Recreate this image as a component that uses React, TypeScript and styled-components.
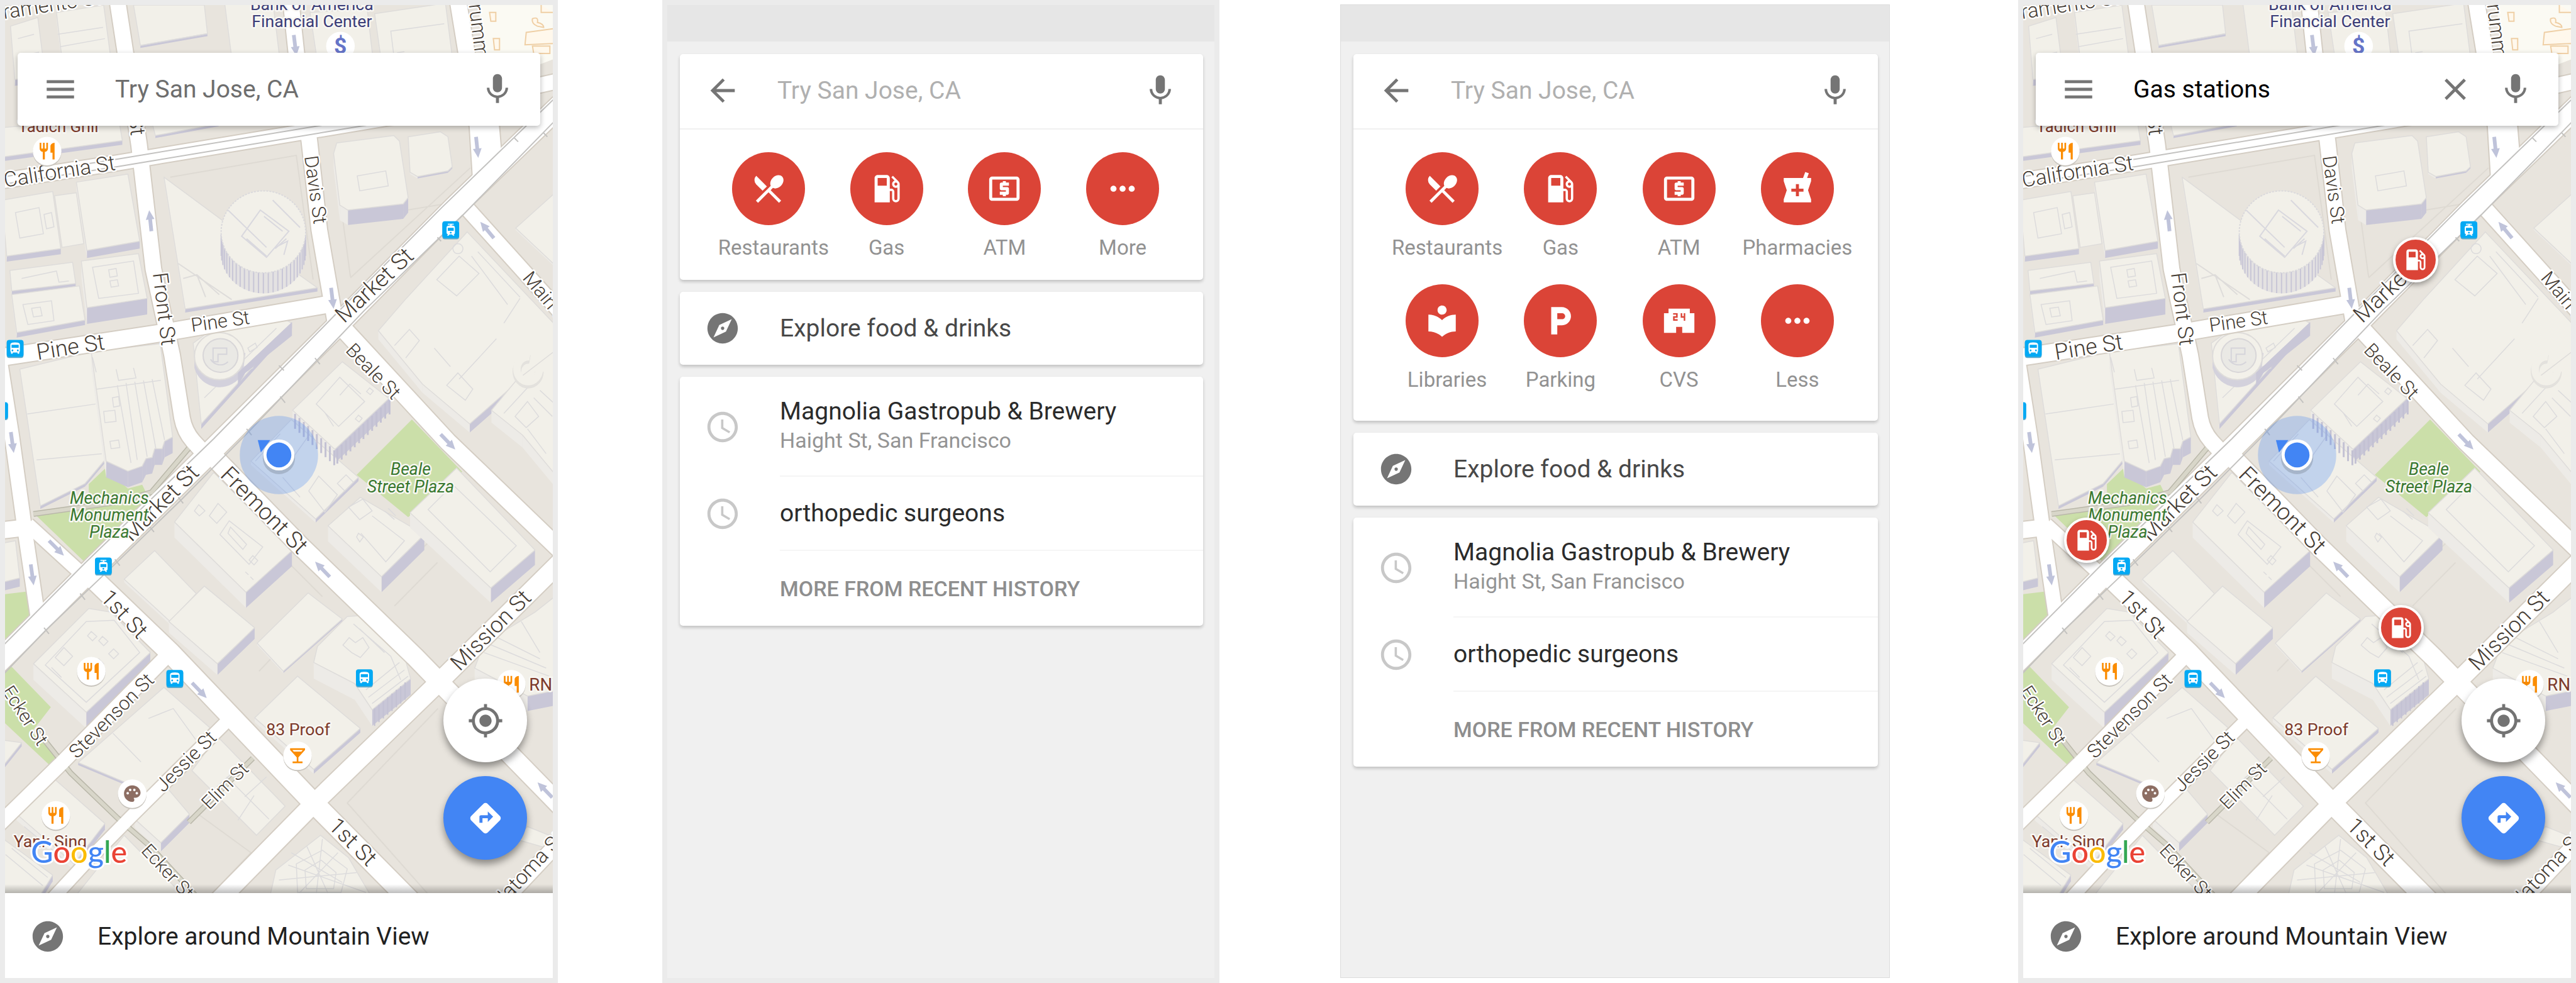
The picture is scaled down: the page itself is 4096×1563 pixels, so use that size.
import React from "react";
import styled, { createGlobalStyle } from "styled-components";
import type { IconType } from "react-icons";
import {
  MdMenu, MdMic, MdArrowBack, MdExplore, MdSchedule, MdMyLocation, MdDirections,
  MdLocalGasStation, MdLocalAtm, MdLocalPharmacy, MdLocalLibrary, MdLocalParking,
  MdLocalConvenienceStore, MdMoreHoriz, MdRestaurantMenu, MdLocalBar, MdPalette,
  MdRestaurant, MdClose, MdDirectionsBus, MdTram,
} from "react-icons/md";

const GlobalStyle = createGlobalStyle`
  * { box-sizing: border-box; }
  body { margin: 0; background: #fff; font-family: Roboto, "Liberation Sans", sans-serif; }
  button, input { font: inherit; color: inherit; border: 0; padding: 0; background: none; }
  svg { display: block; }
`;

const Board = styled.main`
  display: grid;
  grid-template-columns: 887fr 166fr 886fr 192fr 874fr 204fr 887fr;
  min-height: 100vh;
`;

const Phone = styled.section<{ $column: number; $outlined?: boolean }>`
  grid-column: ${(p) => p.$column};
  display: flex;
  flex-direction: column;
  min-width: 0;
  ${(p) =>
    p.$outlined
      ? "margin: 7px 0 8px; border: 1px solid #dcdcdc;"
      : "border: 8px solid #ebebeb;"}
`;

/* ---------- search bar ---------- */

const SearchRow = styled.div`
  display: flex;
  align-items: center;
  height: 116px;
  padding: 0 39px;
`;

const FloatingSearch = styled(SearchRow)`
  position: relative;
  margin: 76px 20px 0;
  background: #fff;
  border-radius: 5px;
  box-shadow: 0 3px 8px rgba(0, 0, 0, 0.28);
`;

const IconButton = styled.button`
  flex: none;
  width: 58px;
  height: 58px;
  color: #757575;
`;

const SearchInput = styled.input<{ $tone: string }>`
  flex: 1;
  min-width: 0;
  margin: 0 38px 0 58px;
  height: 46px;
  font-size: 39px;
  line-height: 46px;
  color: #000;
  outline: none;
  &::placeholder { color: ${(p) => p.$tone}; opacity: 1; }
`;

const ClearButton = styled(IconButton)`
  margin-right: 38px;
`;

/* ---------- suggestion screens ---------- */

const StatusBar = styled.div`
  height: 58px;
  background: #e6e6e6;
`;

const Suggestions = styled.div`
  flex: 1;
  display: flex;
  flex-direction: column;
  gap: 19px;
  padding: 20px 18px 20px 20px;
  background: #f0f0f0;
`;

const Card = styled.div`
  background: #fff;
  border-radius: 5px;
  box-shadow: 0 3px 5px rgba(0, 0, 0, 0.2);
`;

const CardHead = styled.div`
  padding-bottom: 2px;
  border-bottom: 2px solid #f0f0f0;
`;

const TileGrid = styled.div<{ $expanded: boolean }>`
  display: grid;
  grid-template-columns: repeat(4, minmax(0, 1fr));
  row-gap: 38px;
  padding: 36px 34px ${(p) => (p.$expanded ? 45 : 31)}px 47px;
`;

const TileLabel = styled.span`
  font-size: 33px;
  line-height: 40px;
  white-space: nowrap;
`;

const Tile = styled.button`
  display: flex;
  flex-direction: column;
  align-items: center;
  gap: 16px;
  color: #929292;
  &:nth-child(4n + 1) ${TileLabel} { padding-left: 16px; }
`;

const Disc = styled.span`
  display: grid;
  place-items: center;
  width: 116px;
  height: 116px;
  border-radius: 50%;
  background: #db4437;
  color: #fff;
`;

const Row = styled.button<{ $height: number }>`
  display: flex;
  align-items: center;
  width: 100%;
  height: ${(p) => p.$height}px;
  padding-left: 39px;
  text-align: left;
`;

const RowIcon = styled.span<{ $tone: string }>`
  flex: none;
  width: 58px;
  height: 58px;
  margin-right: 62px;
  color: ${(p) => p.$tone};
`;

const RowBody = styled.span`
  flex: 1;
  display: flex;
  flex-direction: column;
  justify-content: center;
  align-self: stretch;
  gap: 3px;
`;

const HistoryRow = styled(Row)`
  ${RowBody} { border-bottom: 2px solid #f5f5f5; }
`;

const Title = styled.span<{ $tone?: string }>`
  font-size: 39px;
  line-height: 46px;
  color: ${(p) => p.$tone ?? "#2b2b2b"};
`;

const Subtitle = styled.span`
  font-size: 34px;
  line-height: 40px;
  padding-bottom: 5px;
  color: #949494;
`;

const MoreLabel = styled.span`
  margin-left: 120px;
  font-size: 34px;
  line-height: 40px;
  font-weight: 500;
  color: #8e8e8e;
`;

/* ---------- map screens ---------- */

const MapArea = styled.div`
  position: relative;
  flex: 1;
  overflow: hidden;
  background: #e8e4dd;
  &::after {
    content: "";
    position: absolute;
    inset: auto 0 0 0;
    height: 14px;
    background: linear-gradient(rgba(0, 0, 0, 0), rgba(0, 0, 0, 0.26));
  }
`;

const MapDrawing = styled.svg`
  position: absolute;
  inset: 0;
  width: 100%;
  height: 100%;
`;

const FabStack = styled.div`
  position: absolute;
  right: 41px;
  bottom: 53px;
  display: flex;
  flex-direction: column;
  gap: 22px;
`;

const Fab = styled.button<{ $primary?: boolean }>`
  display: grid;
  place-items: center;
  width: 133px;
  height: 133px;
  border-radius: 50%;
  background: ${(p) => (p.$primary ? "#4285f4" : "#fff")};
  color: ${(p) => (p.$primary ? "#fff" : "#737373")};
  box-shadow: 0 7px 12px rgba(0, 0, 0, 0.4);
`;

const Pin = styled.button`
  position: absolute;
  display: grid;
  place-items: center;
  width: 72px;
  height: 72px;
  margin: -36px 0 0 -36px;
  border: 4px solid #fff;
  border-radius: 50%;
  background: #db4437;
  color: #fff;
  box-shadow: 0 4px 8px rgba(0, 0, 0, 0.35);
`;

const ExploreBar = styled.button`
  display: flex;
  align-items: center;
  gap: 50px;
  height: 135px;
  padding: 3px 39px 0;
  background: #fff;
  color: #757575;
`;

/* ---------- map drawing ---------- */

type Pt = [number, number];
type Building = { top: Pt[]; h: number };

const buildings: Building[] = [
  { top: [[18, 42], [62, 28], [74, 122], [25, 128]], h: 10 },
  { top: [[92, 20], [168, 8], [180, 98], [103, 112]], h: 12 },
  { top: [[216, 8], [330, 8], [335, 54], [227, 73]], h: 4 },
  { top: [[362, 0], [440, 0], [452, 100], [375, 100]], h: 6 },
  { top: [[500, 20], [592, 14], [602, 100], [512, 100]], h: 6 },
  { top: [[604, 22], [718, 5], [730, 100], [615, 100]], h: 6 },
  { top: [[8, 205], [192, 190], [198, 226], [8, 252]], h: 7 },
  { top: [[244, 190], [352, 190], [353, 199], [251, 218]], h: 4 },
  { top: [[265, 285], [357, 353], [512, 463], [299, 497]], h: 6 },
  { top: [[543, 230], [635, 218], [644, 227], [658, 318], [650, 328], [561, 338], [548, 330], [538, 247]], h: 24 },
  { top: [[658, 220], [710, 212], [722, 220], [729, 268], [722, 275], [673, 284], [661, 277]], h: 3 },
  { top: [[4, 322], [86, 308], [99, 400], [12, 412]], h: 9 },
  { top: [[89, 315], [124, 310], [136, 392], [101, 398]], h: 0 },
  { top: [[124, 293], [207, 280], [226, 388], [141, 403]], h: 12 },
  { top: [[17, 435], [118, 422], [123, 456], [20, 468]], h: 7 },
  { top: [[132, 420], [224, 408], [238, 480], [141, 495]], h: 26 },
  { top: [[20, 474], [129, 460], [138, 515], [28, 535]], h: 8 },
  { top: [[33, 594], [148, 566], [170, 740], [138, 778], [66, 814]], h: 5 },
  { top: [[148, 566], [259, 553], [279, 703], [266, 710], [262, 722], [250, 722], [246, 736], [236, 738], [230, 750], [207, 758], [172, 742]], h: 26 },
  { top: [[312, 552], [345, 528], [460, 514], [471, 520], [325, 682]], h: 8 },
  { top: [[552, 582], [627, 641], [540, 723], [472, 660]], h: 22 },
  { top: [[405, 742], [470, 675], [578, 768], [509, 835]], h: 6 },
  { top: [[345, 760], [471, 886], [397, 953], [282, 840]], h: 25 },
  { top: [[581, 800], [684, 860], [615, 928], [529, 846]], h: 25 },
  { top: [[736, 753], [862, 885], [791, 946], [661, 825]], h: 24 },
  { top: [[753, 373], [892, 520], [892, 590], [830, 618], [757, 682], [681, 618], [610, 532], [655, 480]], h: 14 },
  { top: [[832, 612], [900, 560], [900, 770], [842, 700], [792, 660]], h: 20 },
  { top: [[900, 305], [831, 367], [900, 432]], h: 3 },
  { top: [[250, 886], [317, 955], [275, 1000], [201, 932]], h: 5 },
  { top: [[330, 943], [411, 1010], [351, 1068], [273, 1000]], h: 18 },
  { top: [[497, 954], [552, 996], [457, 1080], [415, 1035]], h: 3 },
  { top: [[560, 992], [590, 990], [648, 1042], [662, 1092], [600, 1142], [572, 1100], [506, 1066], [512, 1040]], h: 26 },
  { top: [[144, 979], [180, 985], [243, 1050], [140, 1146], [55, 1068]], h: 26 },
  { top: [[265, 1106], [339, 1171], [241, 1275], [127, 1227]], h: 4 },
  { top: [[351, 1185], [460, 1297], [414, 1344], [310, 1240]], h: 0 },
  { top: [[272, 1270], [306, 1310], [260, 1356], [218, 1318]], h: 14 },
  { top: [[480, 1088], [581, 1172], [506, 1238], [411, 1155]], h: 7 },
  { top: [[517, 1344], [562, 1380], [600, 1445], [435, 1445], [445, 1400]], h: 0 },
  { top: [[86, 1251], [170, 1325], [120, 1390], [28, 1310]], h: 10 },
  { top: [[0, 1345], [86, 1408], [60, 1450], [0, 1450]], h: 10 },
  { top: [[201, 1344], [300, 1445], [120, 1445]], h: 0 },
  { top: [[862, 985], [900, 955], [900, 1110], [850, 1120], [765, 1075], [780, 1035]], h: 24 },
  { top: [[0, 875], [26, 870], [33, 930], [0, 938]], h: 14 },
  { top: [[0, 1190], [36, 1195], [0, 1240]], h: 6 },
  { top: [[850, 1330], [900, 1350], [900, 1370], [830, 1350]], h: 0 },
];

const poly = (pts: Pt[]) => pts.map((p) => p.join(",")).join(" ");

function BuildingShape({ top, h }: Building) {
  const area = top.reduce((sum, [x, y], i) => {
    const [nx, ny] = top[(i + 1) % top.length];
    return sum + x * ny - nx * y;
  }, 0);
  const turn = Math.sign(area);
  return (
    <g strokeLinejoin="round">
      {h > 0 &&
        top.map((a, i) => {
          const b = top[(i + 1) % top.length];
          const normalX = (b[1] - a[1]) * turn;
          const normalY = (a[0] - b[0]) * turn;
          if (normalY <= 0) return null;
          const shaded = normalX > -normalY * 0.5;
          return (
            <polygon
              key={i}
              points={poly([a, b, [b[0], b[1] + h], [a[0], a[1] + h]])}
              fill={shaded ? "#c9c7d7" : "#edebe7"}
            />
          );
        })}
      <polygon points={poly(top)} fill="#f2f0e9" stroke="#dedcda" strokeWidth={1.5} />
    </g>
  );
}

const roads: { d: string; w: number }[] = [
  { d: "M190 0 L203 85 L225 233 L248 433 L278 571 L294 672 Q298 694 312 710 L335 735", w: 25 },
  { d: "M-10 293 L190 262 L660 184 L900 130", w: 24 },
  { d: "M469 0 L478 85 L499 227 L515 370 L541 520", w: 25 },
  { d: "M738 0 L752 85 L770 203 L776 300", w: 26 },
  { d: "M790 190 L796 262", w: 26 },
  { d: "M748 330 L910 510", w: 24 },
  { d: "M-10 577 L265 535 L545 487", w: 27 },
  { d: "M-2 560 L20 700 L40 845 L63 1000", w: 23 },
  { d: "M-10 855 L50 848", w: 26 },
  { d: "M46 844 L140 930", w: 22 },
  { d: "M148 928 L275 1050 L497 1283 L680 1468", w: 32 },
  { d: "M345 735 L483 877 L668 1056 L705 1094 L910 1304", w: 30 },
  { d: "M550 525 L722 711 L910 892", w: 28 },
  { d: "M915 892 L706 1099 L507 1292 L340 1462", w: 29 },
  { d: "M275 1050 L100 1228 L-10 1336", w: 23 },
  { d: "M372 1155 L210 1316 L144 1383 L80 1452", w: 20 },
  { d: "M800 1462 L910 1345", w: 24 },
  { d: "M910 162 L730 336 L552 516 L345 722 L141 923 L-10 1074", w: 34 },
];

const alleys = [
  "M60 1175 L115 1244 L190 1316 L242 1361 L315 1440",
  "M408 1220 L305 1323",
  "M55 827 L190 808 L245 792 L305 721",
];

const rails = [
  "M-10 287 L190 256 L660 178", "M-10 299 L190 268 L660 190",
  "M902 150 L713 333 L540 507 L345 706 L138 906 L0 1045",
  "M902 186 L747 345 L587 500 L403 693 L293 804 L190 904 L75 1014 L0 1092",
];

const greens: Pt[][] = [
  [[664, 675], [745, 759], [658, 832], [575, 764]],
  [[60, 830], [144, 816], [247, 796], [138, 905]],
  [[170, 754], [144, 779], [144, 812], [238, 796], [230, 780], [207, 786]],
  [[0, 957], [43, 952], [53, 998], [0, 1050]],
  [[20, 1073], [83, 1138], [52, 1178], [95, 1220], [83, 1233], [0, 1155], [0, 1085]],
];

const arrows: [number, number, number][] = [
  [243, 355, -96], [536, 480, 83], [476, 73, 83], [769, 237, 84], [785, 370, -130],
  [21, 712, 82], [92, 882, 45], [53, 925, 82], [722, 711, 46], [520, 916, -134],
  [322, 1111, 46], [878, 1271, -134],
];

type Street = [string, number, number, number, number, ("start" | "end")?];
const streets: Street[] = [
  ["Sacramento St", -46, 39, -9, 33],
  ["Front St", 212, 219, 83, 34, "end"],
  ["Front St", 247, 440, 83, 34],
  ["California St", 188, 273, -9, 34, "end"],
  ["Davis St", 491, 252, 82, 31],
  ["Drumm St", 753, -14, 83, 33],
  ["Pine St", 62, 579, -9, 36],
  ["Pine St", 310, 534, -8, 31],
  ["Market St", 555, 521, -43, 37],
  ["Market St", 213, 873, -45, 37],
  ["Fremont St", 354, 766, 45, 37],
  ["Beale St", 556, 565, 46, 31],
  ["Main St", 841, 448, 50, 31],
  ["1st St", 161, 963, 47, 36],
  ["1st St", 528, 1331, 45, 36],
  ["Mission St", 741, 1081, -45, 36],
  ["Stevenson St", 125, 1222, -45, 31],
  ["Jessie St", 264, 1276, -45, 31],
  ["Elim St", 338, 1304, -45, 30],
  ["Ecker St", 4, 1112, 57, 30],
  ["Ecker St", 227, 1370, 47, 30],
  ["Natoma St", 806, 1464, -47, 33],
];

type Place = [string, number, number, number, string, string?];
const places: Place[] = [
  ["Bank of America", 503, 16, 27, "#3b3d78"],
  ["Financial Center", 503, 43, 27, "#3b3d78"],
  ["Tadich Grill", 95, 212, 26, "#7d3a2b"],
  ["83 Proof", 481, 1183, 27, "#7d3a2b"],
  ["Yank Sing", 82, 1363, 27, "#7d3a2b"],
  ["RN74", 887, 1111, 28, "#7d3a2b"],
  ["Beale", 662, 764, 27, "#38782f", "italic"],
  ["Street Plaza", 662, 792, 27, "#38782f", "italic"],
  ["Mechanics", 177, 811, 27, "#38782f", "italic"],
  ["Monument", 177, 838, 27, "#38782f", "italic"],
  ["Plaza", 177, 865, 27, "#38782f", "italic"],
];

const spots: [IconType, number, number, string][] = [
  [MdRestaurant, 77, 243, "#fb8c00"],
  [MdRestaurant, 148, 1080, "#fb8c00"],
  [MdRestaurant, 91, 1312, "#fb8c00"],
  [MdRestaurant, 824, 1101, "#fb8c00"],
  [MdLocalBar, 480, 1216, "#fb8c00"],
  [MdPalette, 214, 1277, "#8d6e63"],
];

const stops: [IconType, number, number][] = [
  [MdTram, 726, 370], [MdTram, 167, 911], [MdDirectionsBus, 25, 561],
  [MdDirectionsBus, 0, 661], [MdDirectionsBus, 282, 1092], [MdDirectionsBus, 587, 1091],
];

const logo: [string, string][] = [
  ["G", "#4285f4"], ["o", "#ea4335"], ["o", "#fbbc05"], ["g", "#4285f4"], ["l", "#34a853"], ["e", "#ea4335"],
];

const StreetText = styled.text`
  fill: #453c34;
  font-weight: 300;
  stroke: #fff;
  stroke-width: 5px;
  stroke-linejoin: round;
  paint-order: stroke;
`;

const PlaceText = styled.text`
  stroke: #f8f7f3;
  stroke-width: 5px;
  stroke-linejoin: round;
  paint-order: stroke;
  text-anchor: middle;
`;

const LogoText = styled.text`
  font-family: Lato, sans-serif;
  font-size: 49px;
  font-weight: 500;
  stroke: #fff;
  stroke-width: 6px;
  stroke-linejoin: round;
  paint-order: stroke;
`;

function CityMap() {
  const ribs = Array.from({ length: 27 }, (_, i) => {
    const angle = (Math.PI * (i + 0.5)) / 27;
    return [425 + 68 * Math.cos(angle), 374 + 64 * Math.sin(angle)];
  });
  return (
    <MapDrawing viewBox="8 8 884 1429" preserveAspectRatio="xMidYMid slice" role="img" aria-label="Map of downtown San Francisco">
      <rect x="0" y="0" width="900" height="1450" fill="#e8e4dd" />
      <polygon points="768,0 900,0 900,92 840,115 790,115" fill="#fbfaf3" />
      {greens.map((g, i) => <polygon key={i} points={poly(g)} fill="#cbdfa9" />)}

      <g fill="none" stroke="#dedad3" strokeWidth="2">
        <path d="M275 285 L478 250 L505 450 M565 445 L553 355 L735 325 M565 447 L758 270" />
        <path d="M706 1140 L560 1292 L700 1450 M625 935 L720 845 M636 975 L705 905" />
        <path d="M320 1310 L405 1372 L345 1435 M440 880 L520 960 M418 1080 L475 1020" />
      </g>
      {buildings.map((b, i) => <BuildingShape key={i} {...b} />)}

      <g fill="none" stroke="#dcdbdc" strokeWidth="1.5">
        <path d="M26 342 L64 334 L71 376 L33 383 Z M72 345 L84 342 L88 365 L76 368 Z" />
        <path d="M150 430 L216 420 L224 472 L160 480 Z M176 434 l12 -2 l2 12 l-12 2 Z M178 452 l12 -2 l2 10 l-12 2 Z" />
        <path d="M36 448 L92 436 L96 454 L112 452 M38 490 L84 484 L88 516 L46 522 Z M52 496 l14 -2 l3 14 l-14 2 Z" />
        <path d="M94 55 L167 44 M98 75 L170 62 M30 62 L56 55 M34 90 L64 84" />
        <path d="M228 73 L335 54 M635 90 L630 50 L716 38 M640 85 l12 -2" />
        <path d="M576 283 L622 275 L626 299 L580 307 Z" />
        <path d="M45 666 L155 650 M60 740 L165 730 M157 626 L260 612 M190 620 L212 745 M204 616 L222 740 M218 614 L238 735 M232 612 L252 722 M246 610 L266 708" />
        <path d="M182 640 l10 -2 l2 15 l-10 2 Z M168 662 l18 -2 l2 18 l-18 2 Z M178 710 l14 -2 l2 12 l-14 2 Z M188 594 l4 18 l28 -4 l-4 -16 M150 575 l6 24" />
        <path d="M390 592 l14 -6 l4 6 l-14 7 Z M400 560 l12 -8 l3 7 l-12 7 Z M330 640 L446 528" />
        <path d="M548 607 L588 646 L546 686 L510 650 Z M548 636 l16 -18 l18 16 M524 664 l14 22 M578 668 l6 5 l-5 6 l-6 -5 Z M596 624 l6 5 l-5 6 l-6 -5 Z" />
        <path d="M514 766 L544 796 L524 824 L498 790 Z M558 764 l12 12 l-14 14 l-12 -12 Z M456 768 L484 800 M412 742 l40 -44 M500 698 L470 740" />
        <path d="M321 812 l10 10 l-9 8 l-8 -8 Z M352 810 l14 14 l-16 18 l-12 -12 Z M370 838 L424 880 L402 908 L355 860 Z M372 848 l26 28 l-6 8 l-24 -26 Z M408 894 l8 8 l-6 7 l-8 -8 Z M396 920 l5 5 M404 928 l5 5" />
        <path d="M585 803 L600 822 L580 836 L562 816 Z M600 830 L652 870 L622 904 L582 858 M620 822 l16 14 M626 818 l12 12 M578 858 l8 6 l-6 8 l-5 -8 Z" />
        <path d="M690 820 L730 780 L832 878 L790 920 Z" />
        <path d="M740 412 L772 440 L736 476 L704 450 Z M738 408 a8 8 0 1 1 .1 0 M770 405 L838 478 M760 412 L818 490 M700 560 L726 590 M812 520 L838 480 M740 610 L800 545 M720 620 l18 -20 l24 26 l-12 18 Z M636 556 l24 -26 l16 18 l-22 28" />
        <path d="M850 690 L880 730 M812 665 L872 600 M830 670 l20 -24 l18 24 l-20 18 Z M860 640 l30 30 M870 628 l26 24" />
        <path d="M140 1000 L185 998 L226 1050 L140 1130 L74 1070 Z M90 1058 l14 -16 l14 14 l-14 15 Z M84 1074 l16 16 M148 1016 l9 8 l-7 7 l-8 -8 Z M166 1024 l9 8 l-7 7 l-8 -8 Z M184 1044 l8 8 l-8 8 l-8 -8 Z M160 1060 l8 8 l-8 8 l-8 -8 Z" />
        <path d="M570 1004 L630 1056 L646 1094 M580 1012 L620 1050 M553 1038 l10 -12 l10 8 l12 -8 l10 16 l-14 16 l-14 -8 Z M590 1110 l54 -44 M594 1122 l58 -44 M600 1132 l58 -44" />
        <path d="M183 1180 L228 1226 M240 1156 L280 1140 L316 1190 M366 1250 L434 1318 M395 1282 L430 1250 M350 1266 L385 1235 M384 1320 L410 1280" />
        <path d="M470 1372 L552 1420 M495 1362 L530 1440 M520 1350 L510 1440 M545 1372 L480 1440 M575 1404 L450 1416 M465 1392 L590 1436" />
        <path d="M478 1390 L520 1368 L560 1398 L550 1436 L480 1436 Z M492 1400 L518 1384 L542 1404 L538 1430 L494 1430 Z" />
        <path d="M790 1020 L870 1060 M785 1035 L880 1075 M780 1050 L885 1088 M840 1000 L870 1050" />
        <path d="M10 1375 L70 1425 M20 1365 L78 1412 M40 1330 L100 1380" />
      </g>

      <g fill="none" strokeLinecap="butt">
        <ellipse cx="851" cy="598" rx="18" ry="20" stroke="#e3e1dd" strokeWidth="14" strokeDasharray="92 28" />
        <ellipse cx="851" cy="594" rx="18" ry="20" stroke="#f2f0e9" strokeWidth="12" strokeDasharray="92 28" />
      </g>

      {/* cylindrical office tower */}
      <path d="M357 370 V408 A68 64 0 0 0 493 408 V370 Z" fill="#e4e2e2" />
      {ribs.map(([x, y], i) => (
        <path key={i} d={`M${x} ${y} v34`} stroke="#c8c6d6" strokeWidth="2" />
      ))}
      <ellipse cx="425" cy="373" rx="68" ry="66" fill="#f2f0e9" stroke="#dad9dc" strokeWidth="2" strokeDasharray="3 2" />
      <g fill="none" stroke="#d9d8de" strokeWidth="2">
        <path d="M420 338 L466 372 L430 414 L390 380 Z M426 348 L456 372 M398 384 l32 28 M444 400 L462 384 M368 338 L430 398 M440 322 L484 366 M448 396 l16 -8 l-6 22" />
        <path d="M288 424 L374 482 M296 448 l22 -6 l36 32 M318 442 l14 36" stroke="#dedcda" />
      </g>

      {/* rounded tower on the wedge block */}
      <path d="M314 568 V592 A42 42 0 0 0 392 600 L396 568 Z" fill="#d3d1dc" />
      <ellipse cx="354" cy="573" rx="40" ry="38" fill="#f3f1ea" stroke="#dedcda" strokeWidth="2" />
      <ellipse cx="356" cy="572" rx="28" ry="27" fill="#eae9e5" stroke="#d8d6d8" strokeWidth="2" />
      <path d="M344 560 h22 v10 h-14 v12 h-8 Z M340 578 a18 18 0 0 0 28 4" fill="none" stroke="#d5d4da" strokeWidth="2" />
      <path d="M471 518 V540 L396 600 L384 620 V600 Z" fill="#c9c7d7" />

      {/* striped facades */}
      <g stroke="#c3c1d3" strokeWidth="3">
        {Array.from({ length: 13 }, (_, i) => (
          <path key={i} d={`M${544 + i * 7} ${722 - i * 6.6} v24`} />
        ))}
        {Array.from({ length: 10 }, (_, i) => (
          <path key={i} d={`M${476 + i * 7} ${666 + i * 6.5} v24`} />
        ))}
        {Array.from({ length: 8 }, (_, i) => (
          <path key={i} d={`M${604 + i * 7} ${1140 - i * 6} v28`} strokeWidth="2" />
        ))}
      </g>

      <g fill="#fff8ec" stroke="#efcfa5" strokeWidth="2">
        <path d="M789 20 h10 v14 h-8 Z M795 62 h10 v18 h-8 Z M848 52 L892 46 V70 L846 72 Z M858 74 h28 v12 h-26 Z M858 30 q10 -4 8 6 q10 2 10 8 l-10 -2 q-10 -4 -8 -12 Z M872 8 V20 H892" />
      </g>

      <g fill="none" stroke="#d4cdc3" strokeLinejoin="round">
        {roads.map((r) => <path key={r.d} d={r.d} strokeWidth={r.w + 4} />)}
      </g>
      <g fill="none" stroke="#b9b7a9">
        {alleys.map((d) => <path key={d} d={d} strokeWidth="9" />)}
      </g>
      <g fill="none" stroke="#d8d6c9">
        {alleys.map((d) => <path key={d} d={d} strokeWidth="6" />)}
      </g>
      <g fill="none" stroke="#fff" strokeLinejoin="round">
        {roads.map((r) => <path key={r.d} d={r.d} strokeWidth={r.w} />)}
      </g>
      <g fill="none" stroke="#c3c2c0" strokeWidth="2">
        {rails.map((d) => <path key={d} d={d} />)}
        <path d="M829 222 l6 6 M508 576 l8 10 M452 638 l8 10 M398 690 l8 10 M288 800 l8 10 M241 846 l8 10 M186 900 l8 10 M130 955 l8 10 M72 1010 l8 10 M450 588 l8 8 M876 214 l6 6 M705 382 l6 6" />
      </g>

      {arrows.map(([x, y, r], i) => (
        <path key={i} transform={`translate(${x} ${y}) rotate(${r})`} d="M-17 -3 H2 V-7 L17 0 L2 7 V3 H-17 Z" fill="#bfc3da" />
      ))}

      {streets.map(([name, x, y, r, size, anchor], i) => (
        <StreetText key={i} transform={`translate(${x} ${y}) rotate(${r})`} fontSize={size} textAnchor={anchor ?? "start"}>
          {name}
        </StreetText>
      ))}

      {stops.map(([Icon, x, y], i) => (
        <g key={i}>
          <rect x={x - 13} y={y - 13} width="27" height="28" rx="4" fill="#5aa9cc" />
          <rect x={x - 13} y={y - 14} width="27" height="27" rx="4" fill="#03a9f4" />
          <Icon x={x - 11} y={y - 12} size={23} color="#fff" />
        </g>
      ))}
      {spots.map(([Icon, x, y, color], i) => (
        <g key={i}>
          <circle cx={x} cy={y + 2} r="23" fill="#c9c5be" />
          <circle cx={x} cy={y} r="23" fill="#fff" />
          <Icon x={x - 16} y={y - 16} size={32} color={color} />
        </g>
      ))}
      <circle cx="549" cy="74" r="23" fill="#fff" />
      <text x="549" y="86" fontSize="36" fontWeight="700" fill="#6574c8" textAnchor="middle">$</text>

      {places.map(([name, x, y, size, fill, style], i) => (
        <PlaceText key={i} x={x} y={y} fontSize={size} fill={fill} fontStyle={style ?? "normal"}>
          {name}
        </PlaceText>
      ))}

      <circle cx="450" cy="732" r="63" fill="#4285f4" fillOpacity="0.27" />
      <path d="M416 708 H436 L421 728 Z" fill="#4285f4" />
      <circle cx="450" cy="737" r="26" fill="#000" fillOpacity="0.14" />
      <circle cx="450" cy="732" r="25" fill="#fff" />
      <circle cx="450" cy="732" r="20" fill="#4285f4" />

      <LogoText x="51" y="1388">
        {logo.map(([letter, fill], i) => <tspan key={i} fill={fill}>{letter}</tspan>)}
      </LogoText>
    </MapDrawing>
  );
}

/* ---------- screens ---------- */

const gasPins = [
  { left: 71.6, top: 28.7 },
  { left: 11.6, top: 60.3 },
  { left: 69, top: 70.1 },
];

function MapScreen({ column, query }: { column: number; query?: string }) {
  return (
    <Phone $column={column}>
      <MapArea>
        <CityMap />
        {query &&
          gasPins.map((pin) => (
            <Pin key={pin.top} aria-label="Gas station" style={{ left: `${pin.left}%`, top: `${pin.top}%` }}>
              <MdLocalGasStation size={44} />
            </Pin>
          ))}
        <FloatingSearch role="search">
          <IconButton aria-label="Menu"><MdMenu size={58} /></IconButton>
          <SearchInput aria-label="Search maps" placeholder="Try San Jose, CA" defaultValue={query} $tone="#6e6e6e" />
          {query && <ClearButton aria-label="Clear"><MdClose size={58} /></ClearButton>}
          <IconButton aria-label="Voice search"><MdMic size={58} /></IconButton>
        </FloatingSearch>
        <FabStack>
          <Fab aria-label="My location"><MdMyLocation size={58} /></Fab>
          <Fab aria-label="Directions" $primary><MdDirections size={58} /></Fab>
        </FabStack>
      </MapArea>
      <ExploreBar>
        <MdExplore size={58} />
        <Title $tone="#212121">Explore around Mountain View</Title>
      </ExploreBar>
    </Phone>
  );
}

const basicTiles: [string, IconType][] = [
  ["Restaurants", MdRestaurantMenu],
  ["Gas", MdLocalGasStation],
  ["ATM", MdLocalAtm],
];
const collapsedTiles: [string, IconType][] = [...basicTiles, ["More", MdMoreHoriz]];
const expandedTiles: [string, IconType][] = [
  ...basicTiles,
  ["Pharmacies", MdLocalPharmacy],
  ["Libraries", MdLocalLibrary],
  ["Parking", MdLocalParking],
  ["CVS", MdLocalConvenienceStore],
  ["Less", MdMoreHoriz],
];

function SuggestScreen({ column, expanded = false }: { column: number; expanded?: boolean }) {
  const tiles = expanded ? expandedTiles : collapsedTiles;
  return (
    <Phone $column={column} $outlined={expanded}>
      <StatusBar />
      <Suggestions>
        <Card>
          <CardHead>
            <SearchRow role="search">
              <IconButton aria-label="Back"><MdArrowBack size={58} /></IconButton>
              <SearchInput aria-label="Search maps" placeholder="Try San Jose, CA" $tone="#b0b0b0" />
              <IconButton aria-label="Voice search"><MdMic size={58} /></IconButton>
            </SearchRow>
          </CardHead>
          <TileGrid $expanded={expanded}>
            {tiles.map(([label, Icon]) => (
              <Tile key={label}>
                <Disc><Icon size={58} /></Disc>
                <TileLabel>{label}</TileLabel>
              </Tile>
            ))}
          </TileGrid>
        </Card>
        <Card>
          <Row $height={116}>
            <RowIcon $tone="#757575"><MdExplore size={58} /></RowIcon>
            <Title $tone="#484848">Explore food &amp; drinks</Title>
          </Row>
        </Card>
        <Card>
          <HistoryRow $height={159}>
            <RowIcon $tone="#c8c8c8"><MdSchedule size={58} /></RowIcon>
            <RowBody>
              <Title>Magnolia Gastropub &amp; Brewery</Title>
              <Subtitle>Haight St, San Francisco</Subtitle>
            </RowBody>
          </HistoryRow>
          <HistoryRow $height={118}>
            <RowIcon $tone="#c8c8c8"><MdSchedule size={58} /></RowIcon>
            <RowBody><Title>orthopedic surgeons</Title></RowBody>
          </HistoryRow>
          <Row $height={119}>
            <MoreLabel>MORE FROM RECENT HISTORY</MoreLabel>
          </Row>
        </Card>
      </Suggestions>
    </Phone>
  );
}

export default function App() {
  return (
    <>
      <GlobalStyle />
      <Board>
        <MapScreen column={1} />
        <SuggestScreen column={3} />
        <SuggestScreen column={5} expanded />
        <MapScreen column={7} query="Gas stations" />
      </Board>
    </>
  );
}
